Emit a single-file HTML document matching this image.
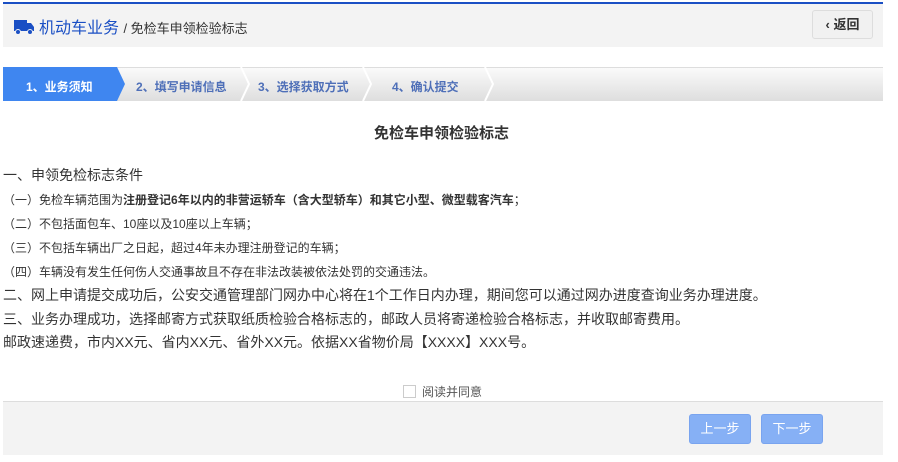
<!DOCTYPE html>
<html><head><meta charset="utf-8"><style>
*{margin:0;padding:0;box-sizing:border-box}
body{width:898px;height:462px;background:#fff;font-family:"Liberation Sans","Noto Sans CJK SC",sans-serif;color:#333;position:relative;overflow:hidden}
.abs{position:absolute;white-space:nowrap}
.hdr{position:absolute;left:3px;top:2px;width:880px;height:45px;background:#f3f3f3;border-top:2px solid #1a4fc4}
.steps{position:absolute;left:3px;top:67px;width:880px;height:34px;background:linear-gradient(#fafafa,#dedede);border-top:1px solid #ddd}
.st{position:absolute;top:10px;font-size:12px;font-weight:bold;color:#4e6fb8}
.ln{font-size:14px;color:#333}
.sm{font-size:12px;color:#333}
.btn{position:absolute;top:414px;width:62px;height:30px;background:#86b0f5;border:1px solid #79a4ef;border-radius:3px;color:#fff;font-size:13px;text-align:center;line-height:28px}
</style></head><body>
<div class="hdr"></div>
<svg class="abs" style="left:13px;top:17px" width="22" height="18" viewBox="0 0 22 18"><path d="M1 3h13v11H1z M14 6h4l3 4v4h-7z" fill="#1a4fc4"/><circle cx="5" cy="15" r="2.5" fill="#1a4fc4" stroke="#f3f3f3"/><circle cx="17" cy="15" r="2.5" fill="#1a4fc4" stroke="#f3f3f3"/></svg>
<div class="abs" style="left:39px;top:14px;font-size:16px;color:#1a4fc4">机动车业务 <span style="color:#333;font-size:13px">/ 免检车申领检验标志</span></div>
<div class="abs" style="left:812px;top:10px;width:61px;height:29px;border:1px solid #ddd;border-radius:3px;background:#f1f1f1;font-size:13px;font-weight:bold;text-align:center;line-height:27px">‹ 返回</div>
<div class="steps">
<svg class="abs" style="left:0;top:-1px" width="880" height="34">
<path d="M0 0H114L122 17L114 34H0Z" fill="#3f86f0"/>
<path d="M238 0L246 17L238 34M360 0L368 17L360 34M482 0L490 17L482 34" fill="none" stroke="#fff" stroke-width="2"/>
</svg>
<div class="st" style="left:23px;color:#fff">1、业务须知</div>
<div class="st" style="left:133px">2、填写申请信息</div>
<div class="st" style="left:255px">3、选择获取方式</div>
<div class="st" style="left:389px">4、确认提交</div>
</div>
<div class="abs" style="left:0;width:883px;top:122px;text-align:center;font-size:15px;font-weight:bold">免检车申领检验标志</div>
<div class="abs ln" style="left:3px;top:165px">一、申领免检标志条件</div>
<div class="abs sm" style="left:3px;top:191px">（一）免检车辆范围为<b>注册登记6年以内的非营运轿车（含大型轿车）和其它小型、微型载客汽车</b>；</div>
<div class="abs sm" style="left:3px;top:215px">（二）不包括面包车、10座以及10座以上车辆；</div>
<div class="abs sm" style="left:3px;top:239px">（三）不包括车辆出厂之日起，超过4年未办理注册登记的车辆；</div>
<div class="abs sm" style="left:3px;top:263px">（四）车辆没有发生任何伤人交通事故且不存在非法改装被依法处罚的交通违法。</div>
<div class="abs ln" style="left:3px;top:285px">二、网上申请提交成功后，公安交通管理部门网办中心将在1个工作日内办理，期间您可以通过网办进度查询业务办理进度。</div>
<div class="abs ln" style="left:3px;top:309px">三、业务办理成功，选择邮寄方式获取纸质检验合格标志的，邮政人员将寄递检验合格标志，并收取邮寄费用。</div>
<div class="abs ln" style="left:3px;top:332px">邮政速递费，市内XX元、省内XX元、省外XX元。依据XX省物价局【XXXX】XXX号。</div>
<div class="abs" style="left:403px;top:385px;width:13px;height:13px;border:1px solid #ccc"></div>
<div class="abs sm" style="left:422px;top:383px;color:#555">阅读并同意</div>
<div class="abs" style="left:3px;top:401px;width:880px;height:54px;background:#f3f3f3;border-top:1px solid #ddd"></div>
<div class="btn" style="left:689px">上一步</div>
<div class="btn" style="left:761px">下一步</div>
</body></html>
